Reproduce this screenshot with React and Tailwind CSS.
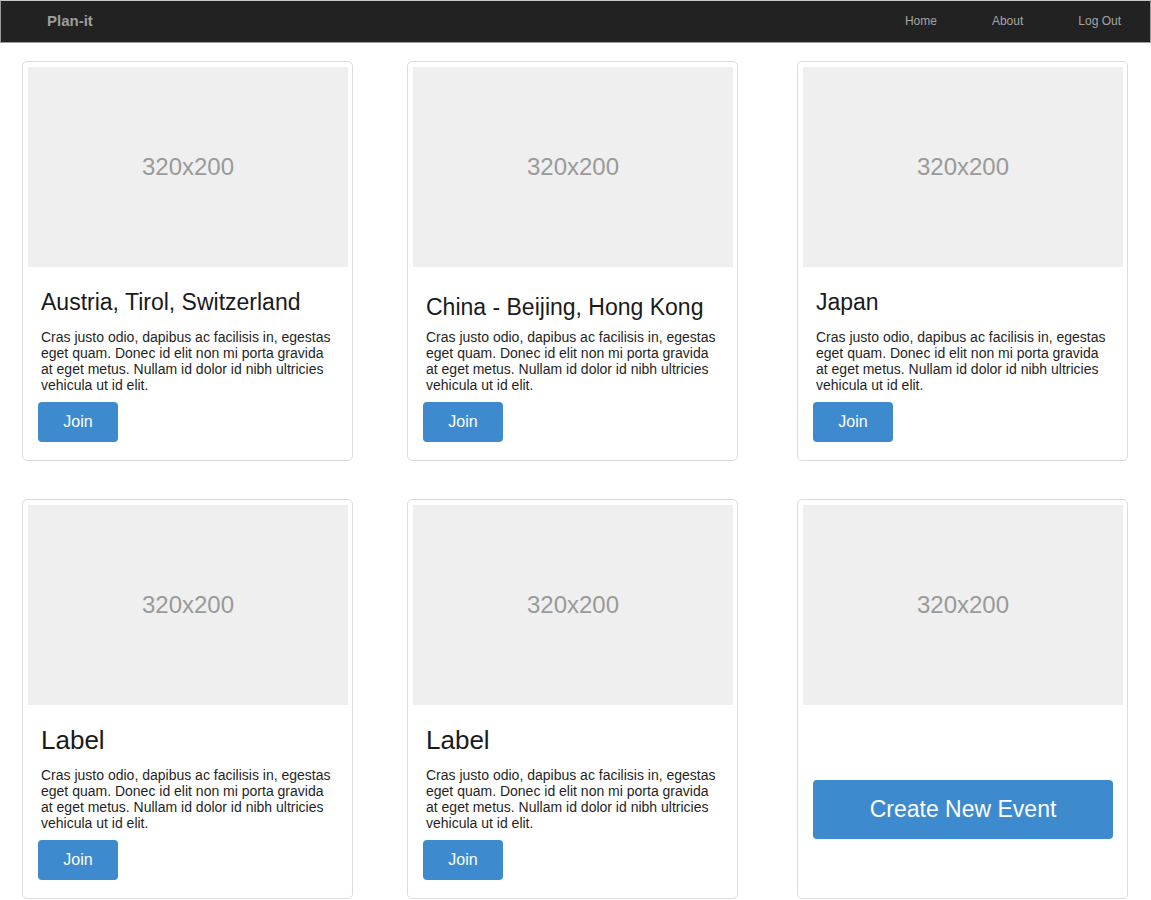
import React from "react";

const LOREM =
  "Cras justo odio, dapibus ac facilisis in, egestas eget quam. Donec id elit non mi porta gravida at eget metus. Nullam id dolor id nibh ultricies vehicula ut id elit.";

function Placeholder() {
  return (
    <div className="w-[320px] h-[200px] flex-none bg-[#efefef] flex items-center justify-center text-[24px] text-[#9a9a9a] leading-none">
      320x200
    </div>
  );
}

function Card({ title, big, titleOffset, className }) {
  return (
    <div
      className={`w-[331px] h-[400px] flex-none border border-[#dcdcdc] rounded-[5px] bg-white pl-[5px] pt-[5px] flex flex-col ${className}`}
    >
      <Placeholder />
      <div
        className={`mt-[22px] pl-[13px] h-[26px] leading-[26px] text-[#1a1a1a] whitespace-nowrap ${
          big ? "text-[26px]" : "text-[23px]"
        } ${titleOffset ? "relative top-[5px]" : ""}`}
      >
        {title}
      </div>
      <p className="mt-[14px] pl-[13px] w-[305px] text-[14px] leading-[16px] text-[#1f1f1f]">
        {LOREM}
      </p>
      <div className="mt-[9px] pl-[10px]">
        <button className="w-[80px] h-[40px] rounded-[4px] bg-[#3d8bce] text-white text-[16px]">
          Join
        </button>
      </div>
    </div>
  );
}

function CreateCard({ className }) {
  return (
    <div
      className={`w-[331px] h-[400px] flex-none border border-[#dcdcdc] rounded-[5px] bg-white pl-[5px] pt-[5px] flex flex-col ${className}`}
    >
      <Placeholder />
      <div className="mt-[75px] pl-[10px]">
        <button className="w-[300px] h-[59px] rounded-[4px] bg-[#3d8bce] text-white text-[23px]">
          Create New Event
        </button>
      </div>
    </div>
  );
}

export default function App() {
  return (
    <div
      className="w-[1151px] min-h-[900px] bg-white"
      style={{ fontFamily: '"Liberation Sans", Arial, sans-serif' }}
    >
      <nav className="h-[43px] bg-[#222222] border border-[#9a9a9a] border-t-[#c8c8c8] flex items-center justify-between">
        <div className="pl-[46px] text-[15px] font-bold text-[#9d9d9d]">Plan-it</div>
        <div className="flex items-center gap-[55px] pr-[29px] text-[12px] text-[#a5a5a5] -mt-[2px]">
          <span>Home</span>
          <span>About</span>
          <span>Log Out</span>
        </div>
      </nav>

      <div className="pt-[18px] flex flex-col gap-[38px]">
        <div className="flex">
          <Card className="ml-[22px]" title="Austria, Tirol, Switzerland" />
          <Card className="ml-[54px]" title="China - Beijing, Hong Kong" titleOffset />
          <Card className="ml-[59px]" title="Japan" />
        </div>
        <div className="flex">
          <Card className="ml-[22px]" title="Label" big />
          <Card className="ml-[54px]" title="Label" big />
          <CreateCard className="ml-[59px]" />
        </div>
      </div>
    </div>
  );
}
